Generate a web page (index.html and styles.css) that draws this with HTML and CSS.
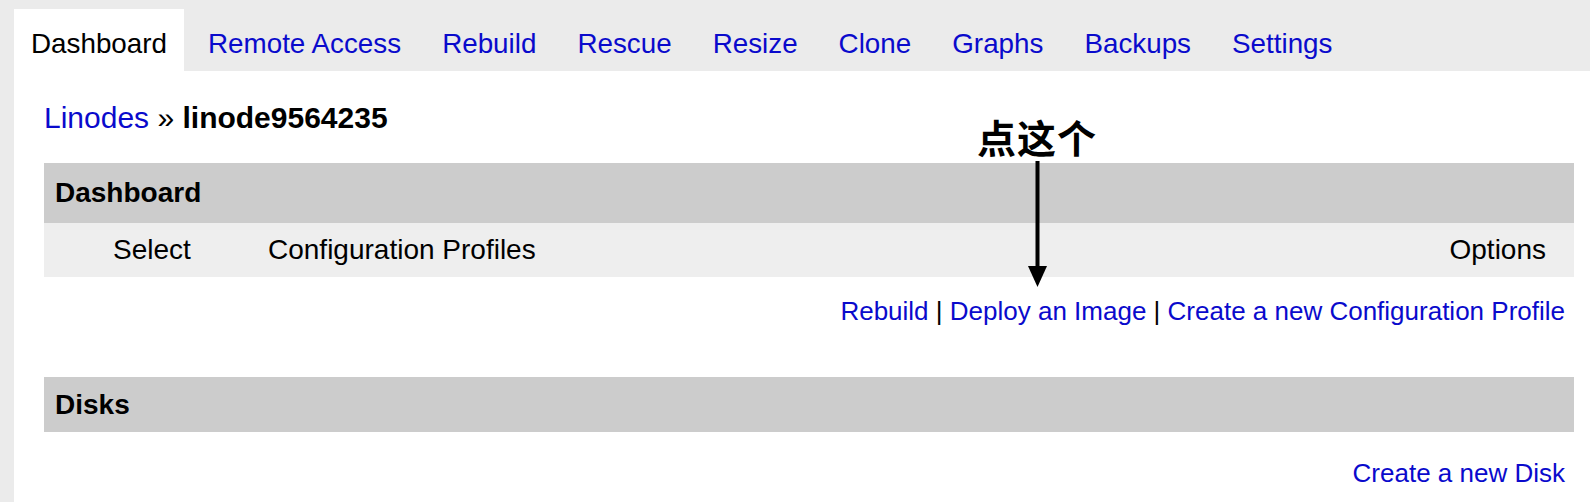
FILE: index.html
```html
<!DOCTYPE html>
<html>
<head>
<meta charset="utf-8">
<link rel="stylesheet" href="styles.css">
</head>
<body>
<nav class="tabs">
  <span class="tab active">Dashboard</span>
  <a class="tab" href="#">Remote Access</a>
  <a class="tab" href="#">Rebuild</a>
  <a class="tab" href="#">Rescue</a>
  <a class="tab" href="#">Resize</a>
  <a class="tab" href="#">Clone</a>
  <a class="tab" href="#">Graphs</a>
  <a class="tab" href="#">Backups</a>
  <a class="tab" href="#">Settings</a>
</nav>
<main class="panel">
  <h1 class="crumb"><a href="#">Linodes</a> <span class="sep">»</span> <strong>linode9564235</strong></h1>
  <section class="block">
    <div class="bar bar-dash">Dashboard</div>
    <div class="cols">
      <span>Select</span>
      <span>Configuration Profiles</span>
      <span>Options</span>
    </div>
    <div class="links links-conf"><a href="#">Rebuild</a> | <a href="#">Deploy an Image</a> | <a href="#">Create a new Configuration Profile</a></div>
  </section>
  <section class="block">
    <div class="bar bar-disks">Disks</div>
    <div class="links links-disk"><a href="#">Create a new Disk</a></div>
  </section>
</main>
<div class="note">点这个</div>
<svg class="arrow" width="21" height="127" viewBox="0 0 21 127">
  <rect x="8.5" y="0" width="4" height="107" fill="#000"/>
  <polygon points="1,105 20,105 10.5,126" fill="#000"/>
</svg>
</body>
</html>
```
FILE: styles.css
```css
html, body {
  margin: 0;
  padding: 0;
}
body {
  background: #ebebeb;
  font-family: "Liberation Sans", Arial, Helvetica, sans-serif;
  color: #000;
  position: relative;
  min-height: 502px;
}
a {
  color: #0a0acc;
  text-decoration: none;
}
.tabs {
  display: flex;
  gap: 7px;
  padding: 9px 0 0 14px;
  height: 62px;
}
.tab {
  font-size: 27.8px;
  padding: 7px 17px 0;
  line-height: 55px;
  height: 55px;
}
.tab.active {
  background: #fff;
  color: #000;
}
.panel {
  background: #fff;
  margin-left: 14px;
  padding: 0 16px 0 30px;
  min-height: 431px;
}
.crumb {
  margin: 0;
  padding-top: 29px;
  font-size: 30px;
  font-weight: normal;
  line-height: 36px;
}
.crumb strong {
  font-weight: bold;
}
.block {
  display: flex;
  flex-direction: column;
}
.block:first-of-type {
  margin-top: 27px;
}
.bar {
  background: #cccccc;
  font-size: 28px;
  font-weight: bold;
  padding-left: 11px;
}
.bar-dash {
  height: 60px;
  line-height: 60px;
}
.bar-disks {
  height: 55px;
  line-height: 55px;
}
.cols {
  background: #eeeeee;
  height: 54px;
  line-height: 54px;
  font-size: 28px;
  display: grid;
  grid-template-columns: 155px 1fr auto;
  padding: 0 28px 0 69px;
}
.links {
  font-size: 26px;
  line-height: 30px;
  text-align: right;
  padding-right: 9px;
}
.links-conf {
  padding-top: 19px;
  padding-bottom: 51px;
}
.links-disk {
  padding-top: 26px;
}
.note {
  position: absolute;
  left: 977px;
  top: 117px;
  font-family: "Noto Sans CJK SC", sans-serif;
  font-weight: bold;
  font-size: 39px;
  line-height: 39px;
  letter-spacing: 1px;
}
.arrow {
  position: absolute;
  left: 1027px;
  top: 161px;
}
```
